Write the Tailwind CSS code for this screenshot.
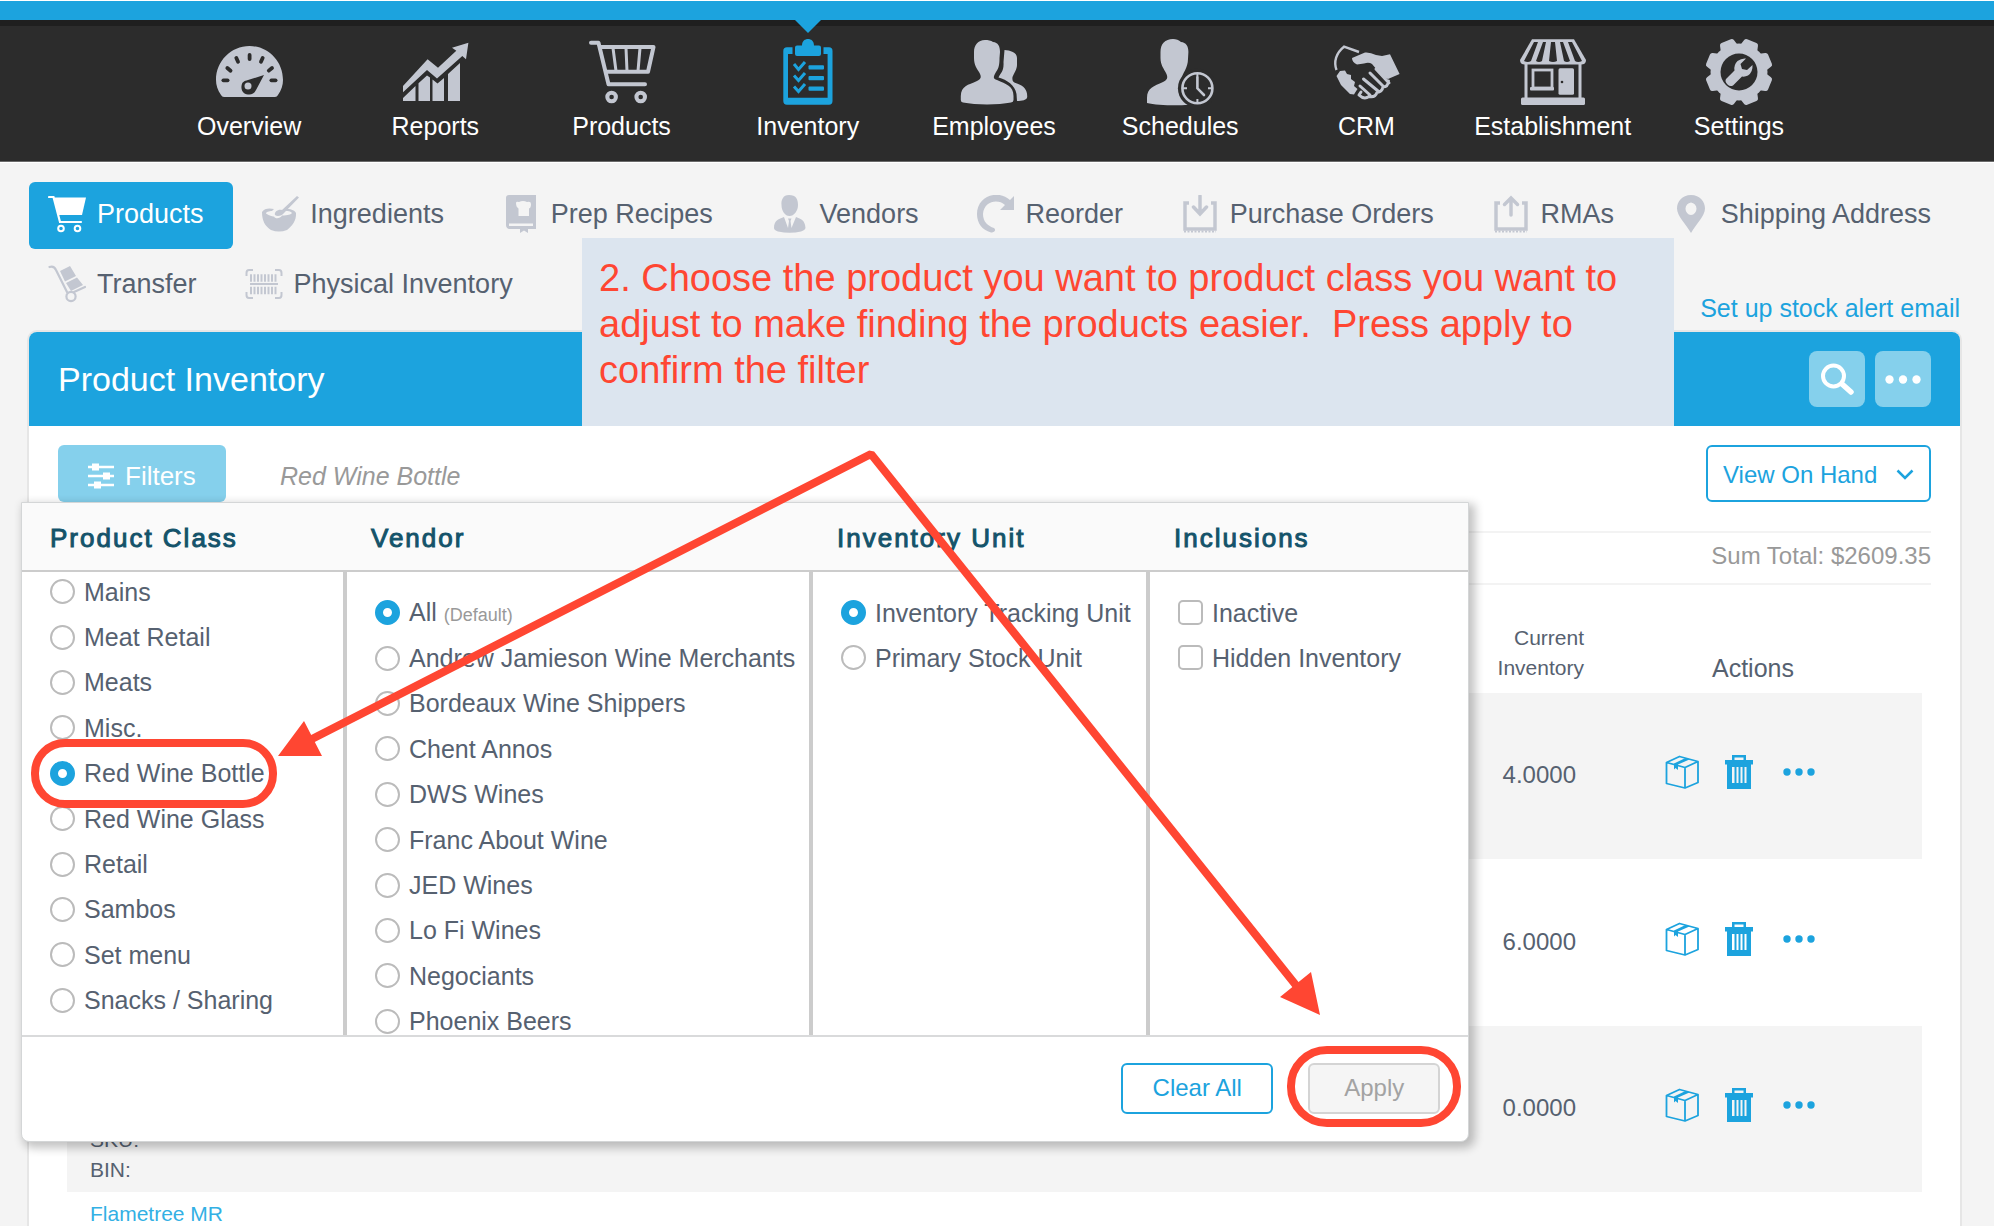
<!DOCTYPE html>
<html lang="en">
<head>
<meta charset="utf-8">
<title>Product Inventory</title>
<script src="https://cdn.jsdelivr.net/npm/@tailwindcss/browser@4"></script>
</head>
<body class="bg-[#f4f4f4] font-['Liberation_Sans',Arial,sans-serif] text-[#566170]">
<svg class="hidden" aria-hidden="true">
  <symbol id="box" viewBox="0 0 34 34">
    <path d="M1.500 7.500 L14.500 1.500 L33 6.500 V27.500 L20 33 L1.500 28.500 Z M1.500 7.500 L20 12.500 L33 6.500 M20 12.500 V33" fill="none" stroke="#1ca3de" stroke-width="1.800" stroke-linejoin="round"/>
    <path d="M20.500 3 L25 4.200 L13 9.500 V15 L10.500 13 L9 14.500 V8.500 Z" fill="#1ca3de"/>
  </symbol>
  <symbol id="trash" viewBox="0 0 28 34">
    <path fill="#1ca3de" fill-rule="evenodd" d="M7 0 H21 V5 H28 V9.500 H26 V34 H2 V9.500 H0 V5 H7 Z M9.500 2.500 V5 H18.500 V2.500 Z M7 12 V28 H9.500 V12 Z M11.500 12 V28 H13.500 V12 Z M15.500 12 V28 H17.500 V12 Z M19.500 12 V28 H21.500 V12 Z"/>
  </symbol>
  <symbol id="dots" viewBox="0 0 32 8">
    <circle cx="4" cy="4" r="3.700" fill="currentColor"/><circle cx="16" cy="4" r="3.700" fill="currentColor"/><circle cx="28" cy="4" r="3.700" fill="currentColor"/>
  </symbol>
</svg>

<div class="relative h-screen overflow-hidden">
  <header class="border-t border-white">
    <div class="h-[19px] bg-[#1ca3de]"></div>
    <nav class="border-t-6 border-b border-t-[#1f1f1f] border-b-[#6a6a6a] bg-[#2c2c2c] pt-3 pr-[162px] pb-[19px] pl-[156px]">
      <ul class="grid grid-cols-9 text-center text-[25px] leading-8 text-white">
        <li><a href="#" class="flex flex-col items-center gap-1">
          <svg class="size-[68px]" viewBox="0 0 68 68"><path fill="#c3c7d1" d="M9 59 Q7 59 6 57 C2.500 52 1 47 1 42 C1 23 16 8 34.500 8 S68 23 68 42 C68 47 66.500 52 63 57 Q62 59 60 59 Z"/>
            <g fill="#2c2c2c"><rect x="32.700" y="15" width="3.800" height="8" rx="1.900"/><rect x="20.300" y="18" width="3.800" height="8" rx="1.900" transform="rotate(-24 22 22)"/><rect x="44.900" y="18" width="3.800" height="8" rx="1.900" transform="rotate(24 47 22)"/><rect x="12" y="27.300" width="3.800" height="8" rx="1.900" transform="rotate(-50 14 31.300)"/><rect x="53.500" y="27.300" width="3.800" height="8" rx="1.900" transform="rotate(50 55.400 31.300)"/><rect x="6.500" y="40.400" width="8" height="3.800" rx="1.900"/><rect x="54.500" y="40.400" width="8" height="3.800" rx="1.900"/>
            <path d="M49 37 L41 52 C39 56 36 57 33 56.500 C28 56 26 52 26.500 48 C27 44 29 43 33 42 Z"/></g><circle cx="33" cy="48" r="3.500" fill="#c3c7d1"/></svg>
          Overview</a></li>
        <li><a href="#" class="flex flex-col items-center gap-1">
          <svg class="size-[68px]" viewBox="0 0 68 68" fill="#c3c7d1"><path d="M2 48 L26.600 21.300 L37 29.700 L55.300 12.700 L51 9.700 L67.400 4.700 L65 21.300 L61.300 18 L36 40.500 L26 32 L2 54.300 Z"/><path d="M2 63 V60 L14.500 48 V63 Z M17.500 63 V45.300 L26 37.500 L29 39.500 V63 Z M31.500 63 V41.500 L36.500 45.500 L43 40 V63 Z M47 63 V36 L59 25 V63 Z"/></svg>
          Reports</a></li>
        <li><a href="#" class="flex flex-col items-center gap-1">
          <svg class="size-[68px]" viewBox="0 0 68 68" fill="none" stroke="#c3c7d1" stroke-width="4" stroke-linecap="round" stroke-linejoin="round"><path d="M3 4.700 H10.500 L20.500 46.300 H57"/><path d="M12.500 9 H65.500 L60 33.700 H18.500"/><path stroke-width="3" d="M25 10 L28 33 M38 10 L39 33 M52 10 L50 33"/><circle cx="23.600" cy="59" r="4.300"/><circle cx="52.700" cy="59" r="4.300"/></svg>
          Products</a></li>
        <li class="relative"><a href="#" class="flex flex-col items-center gap-1">
          <svg class="absolute -top-[18px] h-[13px] w-[26px]" viewBox="0 0 26 13"><path fill="#1ca3de" d="M0 0 H26 L13 13 Z"/></svg>
          <svg class="size-[68px]" viewBox="0 0 68 68" fill="#1ca3de"><path d="M18.500 9.300 H13 Q9.300 9.300 9.300 13 V63 Q9.300 66.700 13 66.700 H55 Q58.500 66.700 58.500 63 V13 Q58.500 9.300 55 9.300 H49.500 V16 H53.600 V59.700 H14 V16 H18.500 Z"/><path d="M28 7.500 C28 3 31 1 34 1 S40 3 40 7.500 H45 Q47 7.500 47 9.500 V16 Q47 18 45 18 H23 Q21 18 21 16 V9.500 Q21 7.500 23 7.500 Z"/><rect x="34.500" y="27.300" width="15.500" height="4.200" rx="1"/><rect x="34.500" y="38" width="15.500" height="4.200" rx="1"/><rect x="34.500" y="48.500" width="15.500" height="4.200" rx="1"/><path fill="none" stroke="#1ca3de" stroke-width="3" d="M20 26 L24.500 31.500 L31 24 M20 37.500 L24.500 42.500 L31 35 M20 48.500 L24.500 53.500 L31 46"/></svg>
          Inventory</a></li>
        <li><a href="#" class="flex flex-col items-center gap-1">
          <svg class="size-[68px]" viewBox="0 0 68 68" fill="#c3c7d1"><path d="M25 2 C18 2 14 7 14 14 V20 C14 27 17 31 19 34 C22 39 21 41 17 43 C8 47 1 48 .8 58 V62 Q.8 64 3 64.500 C16 67 38 67 51 64.500 Q53.500 64 53.500 62 V58 C53.500 48 46 46 37 42 C33 41 33 39 36 34 C39 30 39.500 26 39.500 20 L40 14 C40 8 38 4.500 33 4 C31 2.500 28 2 25 2Z"/><path d="M44.500 12 C50 12.500 57 14 57 20 V25 C57.500 31 54 35 52.500 39 C52 43 53 44 57 45.500 C64 48 67.500 52 67.200 59 C67 62 62 63 57 63 L56.500 56 C55 47 47 42 38.500 39.500 C41 34 44 33 43.500 24Z"/></svg>
          Employees</a></li>
        <li><a href="#" class="flex flex-col items-center gap-1">
          <svg class="size-[68px]" viewBox="0 0 68 68"><path fill="#c3c7d1" d="M27 1 C19 1 14.500 6 14.500 14 V20 C14.500 27 18 31 20 35 C22.500 40 21 42 17 44 C8 48 1 50 1 60 V65 C10 67.500 30 67.500 42 67 L50 48 C44 46 36 44 36 40 C36 36 42 30 42 21 L42.400 14 C42.400 8 40 4.500 35 4 C33 2 30 1 27 1Z"/><circle cx="51.400" cy="50.300" r="19.500" fill="#2c2c2c"/><circle cx="51.400" cy="50.300" r="15" fill="none" stroke="#c3c7d1" stroke-width="2.600"/><path fill="none" stroke="#c3c7d1" stroke-width="2.600" stroke-linecap="round" d="M51.400 39 V50.300 L58 57"/><path stroke="#c3c7d1" stroke-width="2" d="M37 50.300 H41 M62 50.300 H66 M51.400 61 V65 M51.400 35 V38"/></svg>
          Schedules</a></li>
        <li><a href="#" class="flex flex-col items-center gap-1">
          <svg class="size-[68px]" viewBox="0 0 68 68" fill="#c3c7d1"><path fill="none" stroke="#c3c7d1" stroke-width="2.400" d="M4.500 32 C1.500 24 4 15 12 8.700 L27 14"/><path d="M8 33 L13 32.500 L15 36 L19 37 L19 41 L23 44 L22 48 L25.500 51 L23.500 54 L22 56.500 L18 56 L9 47 L4.500 38 Z"/><path d="M20 20 L33 14.500 Q38 14 44 17 L50 18 L58 16.300 L67.600 36 L56 41 L51 39 L40 26 Q37 24 32 25.500 L25 26.500 Q20 24 20 20 Z"/><path fill="none" stroke="#c3c7d1" stroke-width="3" stroke-linecap="round" stroke-linejoin="round" d="M38 35 L51 48 M31.500 41 L46 53 M28 48 L38 57 M56.500 43 Q56 49 51 49 Q50 54 45 54.500 Q43 60 37 58.500 Q32 62 27 57 L29 54 M44 31 L57 45"/></svg>
          CRM</a></li>
        <li><a href="#" class="flex flex-col items-center gap-1">
          <svg class="size-[68px]" viewBox="0 0 68 68"><path fill="#c3c7d1" d="M13 1.300 H55 L67 22 Q67 26.500 62 26.500 H6 Q1 26.500 1 22 Z"/><path fill="#2c2c2c" d="M15 4 H19 L12 23 Q9 25 5 23 Z M24 4 H27 L23 23 Q20 25 17 23 Z M32 4 H36 L38 23 Q34 25 30 23 Z M41 4 H44 L51 23 Q48 25 45 23 Z M49 4 H53 L63 23 Q59 25 56 23 Z"/><path fill="none" stroke="#c3c7d1" stroke-width="3" d="M7 26 V60 M61 26 V60"/><rect x="2" y="59.500" width="64" height="7.500" rx="1.500" fill="#c3c7d1"/><rect x="14" y="32" width="19" height="18" fill="none" stroke="#c3c7d1" stroke-width="2.800"/><rect x="11" y="49" width="24" height="3.500" rx="1" fill="#c3c7d1"/><rect x="39.500" y="30.300" width="15.500" height="26.500" rx="1.500" fill="#c3c7d1"/><circle cx="43" cy="44" r="1.300" fill="#2c2c2c"/></svg>
          Establishment</a></li>
        <li><a href="#" class="flex flex-col items-center gap-1">
          <svg class="size-[68px]" viewBox="0 0 68 68" fill="#c3c7d1"><circle cx="34" cy="34" r="28.500"/><g id="teeth"><path id="tooth" d="M24 12 L26.500 2.500 Q27 .5 29 .5 H39 Q41 .5 41.500 2.500 L44 12 Z" transform="rotate(22.500 34 34)"/><use href="#tooth" transform="rotate(45 34 34)"/><use href="#tooth" transform="rotate(90 34 34)"/><use href="#tooth" transform="rotate(135 34 34)"/><use href="#tooth" transform="rotate(180 34 34)"/><use href="#tooth" transform="rotate(225 34 34)"/><use href="#tooth" transform="rotate(270 34 34)"/><use href="#tooth" transform="rotate(315 34 34)"/></g><circle cx="34" cy="34" r="18.500" fill="#2c2c2c"/><path d="M41 20.500 L35.500 26 L37 31 L42 32 L47.500 27 Q48 34 43 37.500 Q40 39 37 38.500 L28 47.500 Q25 49 22.500 46.500 Q19.500 43.500 21 41 L29.500 32.500 Q28.500 27 32.500 23 Q36.500 20 41 20.500 Z"/></svg>
          Settings</a></li>
      </ul>
    </nav>
  </header>

  <main class="border-t border-white px-[34px] pt-[19px] pl-[29px]">
    <nav aria-label="Inventory sections" class="text-[27px] leading-8">
      <div class="flex justify-between">
        <a href="#" class="flex h-[67px] items-center gap-[11px] rounded-md bg-[#1ca3de] pr-[29px] pb-[3px] pl-[19px] text-white"><svg class="size-[38px]" viewBox="0 0 38 38"><path d="M1 2 H5.500 L12 27 H33" fill="none" stroke="#fff" stroke-width="2.200" stroke-linecap="round"/><path fill="#fff" d="M6 2.500 H38 L34 20 H10 Z"/><circle cx="13" cy="33.500" r="2.800" fill="none" stroke="#fff" stroke-width="2"/><circle cx="29.500" cy="33.500" r="2.800" fill="none" stroke="#fff" stroke-width="2"/></svg>Products</a>
        <a href="#" class="flex h-[67px] items-center gap-[11px] pr-[29px] pb-[3px] pl-[19px]"><svg class="size-[38px]" viewBox="0 0 38 38" fill="#c3c7d1"><path d="M1 17 C3 13 9 13 13 14 L11 16 C8 16 5 17 5 18.500 C8 21 13 21.500 13 21.500 C14 24 19 24 21 20.500 C27 20.500 30 19.500 31 18 C30 16.500 27 16 24 15.800 L26 14 C31 14 34 16 35 18 C35.500 26 31 31 26 35 Q18 38 10 35 C4 31 1 26 1 17Z"/><path d="M36 1 L38 2.500 L23 18 C21 21 16 22 14 20 C13 17 17 14 21 15 Z"/></svg>Ingredients</a>
        <a href="#" class="flex h-[67px] items-center gap-[11px] pr-[29px] pb-[3px] pl-[19px]"><svg class="size-[38px]" viewBox="0 0 38 38"><path fill="#c3c7d1" fill-rule="evenodd" d="M7 0 H34 V34 H26 V38 L22 35.500 L18 38 V34 H7 Q4 33 4 30 V3 Q4 0 7 0 Z M7 28.500 V31 H31 V28.500 Z"/><path fill="#f4f4f4" d="M14 8 Q14 6 17 7 Q21 5 25 7 Q29 6 29 9 Q29 13 27 13.500 V21 H16.500 V13.500 Q14 12 14 8Z"/></svg>Prep Recipes</a>
        <a href="#" class="flex h-[67px] items-center gap-[11px] pr-[29px] pb-[3px] pl-[19px]"><svg class="size-[38px]" viewBox="0 0 38 38" fill="#c3c7d1"><path d="M18 0 C12 0 10 5 10.500 10 C10.500 16 14 21 18.500 21 S27 16 27 10 C27 4 25 0 18 0Z"/><path d="M13 22 L17 33 L18 26 L17 23.500 H20.500 L19.500 26 L20.500 33 L25 22 C30 24 34 25 34.500 33 Q34 35 30 36.500 Q19 39 7 36.500 Q3 35 3 33 C3 25 8 24 13 22Z"/></svg>Vendors</a>
        <a href="#" class="flex h-[67px] items-center gap-[11px] pr-[29px] pb-[3px] pl-[19px]"><svg class="size-[38px]" viewBox="0 0 38 38" fill="#c3c7d1"><path d="M38 1 V15 H24 L29 10 C22 3.500 8 6 7 19 C7 27 12 31 18 33 C21 36 17 38 15 37.500 C6 35 1 28 1 19 C1 1 22 -6 34 5 Z"/></svg>Reorder</a>
        <a href="#" class="flex h-[67px] items-center gap-[11px] pr-[29px] pb-[3px] pl-[19px]"><svg class="size-[38px]" viewBox="0 0 38 38" fill="none" stroke="#c3c7d1" stroke-width="3.500"><path d="M8 8 H4 V34 H34 V8 H30"/><path stroke-dasharray="2 1.500" stroke-width="2" d="M3 36.500 H35"/><path d="M19 1 V18 M12.500 12 L19 19 L25.500 12" stroke-linecap="round"/></svg>Purchase Orders</a>
        <a href="#" class="flex h-[67px] items-center gap-[11px] pr-[29px] pb-[3px] pl-[19px]"><svg class="size-[38px]" viewBox="0 0 38 38" fill="none" stroke="#c3c7d1" stroke-width="3.500"><path d="M8 8 H4 V34 H34 V8 H30"/><path stroke-dasharray="2 1.500" stroke-width="2" d="M3 36.500 H35"/><path d="M19 20 V3 M12.500 9.500 L19 3 L25.500 9.500" stroke-linecap="round"/></svg>RMAs</a>
        <a href="#" class="flex h-[67px] items-center gap-[11px] pr-[29px] pb-[3px] pl-[19px]"><svg class="size-[38px]" viewBox="0 0 38 38" fill="#c3c7d1"><path fill-rule="evenodd" d="M19 0 C10 0 5 6.500 5 13.500 C5 21 14 29 19 38 C24 29 33 21 33 13.500 C33 6.500 28 0 19 0Z M19 7.500 A6.300 6.300 0 0 1 19 20 A6.300 6.300 0 0 1 19 7.500Z"/></svg>Shipping Address</a>
      </div>
      <div class="mt-[3px] flex h-20 items-start">
        <a href="#" class="flex h-[67px] items-center gap-[11px] pr-[29px] pb-[3px] pl-[19px]"><svg class="size-[38px]" viewBox="0 0 38 38"><path d="M1.500 2 Q6 .5 8 5 L19 27 M26 27 L37 22" fill="none" stroke="#c3c7d1" stroke-width="2.200" stroke-linecap="round"/><circle cx="23" cy="31.500" r="4.600" fill="none" stroke="#c3c7d1" stroke-width="2.200"/><path fill="#c3c7d1" d="M12 6 L22 1 L28 11 L17 16.500 Z M18 18 L29 12.500 L35 20 L23 26 Z"/></svg>Transfer</a>
        <a href="#" class="flex h-[67px] items-center gap-[11px] pb-[3px] pl-[19px]"><svg class="size-[38px]" viewBox="0 0 38 38" fill="none" stroke="#c3c7d1"><path stroke-width="2" d="M8 5 H4 Q1.500 5 1.500 8 V11 M30 5 H34 Q36.500 5 36.500 8 V11 M8 33 H4 Q1.500 33 1.500 30 V27 M30 33 H34 Q36.500 33 36.500 30 V27"/><path stroke-width="2" d="M5 19 H33"/><path stroke-width="7.500" stroke-dasharray="2 1.500" d="M5 13 H33 M5 25.500 H33"/></svg>Physical Inventory</a>
        <a href="#" class="ml-auto self-end pb-[9px] text-[25px] leading-[30px] text-[#1ca3de]">Set up stock alert email</a>
      </div>
    </nav>

    <section class="relative rounded-t-lg bg-white shadow-[0_0_0_2px_#e6e6e6]">
      <div class="flex h-[94px] items-center gap-[10px] rounded-t-lg bg-[#1ca3de] pr-[29px] pl-[29px]">
        <h1 class="mr-auto text-[34px] leading-10 text-white">Product Inventory</h1>
        <button type="button" aria-label="Search" class="flex size-14 items-center justify-center rounded-lg bg-[#85d0ec]"><svg class="size-[36px]" viewBox="0 0 36 36" fill="none" stroke="#fff"><circle cx="14.500" cy="15" r="10.500" stroke-width="4"/><path stroke-width="5.500" stroke-linecap="round" d="M23 23 L32 31"/></svg></button>
        <button type="button" aria-label="More" class="flex size-14 items-center justify-center rounded-lg bg-[#85d0ec] text-white"><svg class="h-[9px] w-10"><use href="#dots"/></svg></button>
      </div>
      <div class="px-[29px] pt-[19px]">
        <div class="flex h-[57px] items-center">
          <button type="button" class="flex h-[57px] w-[168px] items-center gap-[11px] rounded-md bg-[#85d0ec] pt-1 pl-[30px] text-[26px] leading-8 text-white"><svg class="size-[26px]" viewBox="0 0 26 26"><path stroke="#fff" stroke-width="2.500" d="M0 4 H26 M0 13 H26 M0 22 H26"/><path fill="#fff" d="M4 .5 H11 V7.500 H4 Z M15 9.500 H22 V16.500 H15 Z M6 18.500 H13 V25.500 H6 Z"/></svg>Filters</button>
          <p class="ml-[54px] pt-1 text-[25px] leading-8 text-[#999] italic">Red Wine Bottle</p>
          <div class="relative ml-auto">
            <select aria-label="View" class="h-[57px] w-[225px] appearance-none rounded-md border-2 border-[#1ca3de] bg-white pt-0.5 pl-[15px] text-2xl text-[#1ca3de]"><option>View On Hand</option></select>
            <svg class="pointer-events-none absolute top-6 right-[17px] h-[11px] w-[18px]" viewBox="0 0 18 11"><path d="M1.500 1.500 L9 9 L16.500 1.500" fill="none" stroke="#1ca3de" stroke-width="2.500"/></svg>
          </div>
        </div>
        <p class="mt-[29px] border-y-2 border-[#f3f3f3] pt-[7px] pb-[11px] text-right text-2xl text-[#999]">Sum Total: $2609.35</p>
      </div>
      <div class="px-[38px]">
        <table class="w-full table-fixed border-collapse">
          <thead>
            <tr class="h-[108px] align-bottom text-[21px] leading-[30px]">
              <td></td>
              <th scope="col" class="w-[120px] pb-[10px] text-right font-normal">Current<br>Inventory</th>
              <th scope="col" class="w-[338px] pb-[10px] text-center text-[25px] font-normal">Actions</th>
            </tr>
          </thead>
          <tbody class="text-2xl">
            <tr class="h-[166px] bg-[#f4f4f4]">
              <td></td>
              <td class="pr-2 pb-0.5 text-right">4.0000</td>
              <td class="pb-2 pl-[81px] text-[#1ca3de]"><div class="flex items-center"><button type="button" aria-label="Stock"><svg class="block size-[34px]"><use href="#box"/></svg></button><button type="button" aria-label="Delete" class="ml-[26px]"><svg class="block h-[34px] w-7"><use href="#trash"/></svg></button><button type="button" aria-label="More" class="ml-[30px]"><svg class="block h-2 w-8"><use href="#dots"/></svg></button></div></td>
            </tr>
            <tr class="h-[167px]">
              <td></td>
              <td class="pr-2 pb-0.5 text-right">6.0000</td>
              <td class="pb-2 pl-[81px] text-[#1ca3de]"><div class="flex items-center"><button type="button" aria-label="Stock"><svg class="block size-[34px]"><use href="#box"/></svg></button><button type="button" aria-label="Delete" class="ml-[26px]"><svg class="block h-[34px] w-7"><use href="#trash"/></svg></button><button type="button" aria-label="More" class="ml-[30px]"><svg class="block h-2 w-8"><use href="#dots"/></svg></button></div></td>
            </tr>
            <tr class="h-[166px] bg-[#f4f4f4]">
              <td class="pb-[7px] pl-[23px] align-bottom text-[21px] leading-[30px]">SKU:<br>BIN:</td>
              <td class="pr-2 pb-0.5 text-right">0.0000</td>
              <td class="pb-2 pl-[81px] text-[#1ca3de]"><div class="flex items-center"><button type="button" aria-label="Stock"><svg class="block size-[34px]"><use href="#box"/></svg></button><button type="button" aria-label="Delete" class="ml-[26px]"><svg class="block h-[34px] w-7"><use href="#trash"/></svg></button><button type="button" aria-label="More" class="ml-[30px]"><svg class="block h-2 w-8"><use href="#dots"/></svg></button></div></td>
            </tr>
            <tr class="h-[166px]">
              <td class="pt-[7px] pl-[23px] align-top text-[21px] leading-[30px]"><a href="#" class="text-[#33b0e4]">Flametree MR</a></td>
              <td></td>
              <td></td>
            </tr>
          </tbody>
        </table>
      </div>

      <!-- Filter popover -->
      <form class="absolute top-[170px] -left-2 w-3/4 rounded-b-lg border border-[#d4d6d7] bg-white text-[25px] leading-8 shadow-[4px_4px_10px_2px_#0000003d]">
        <div class="grid h-[69px] grid-cols-[321px_466px_337px_1fr] items-center border-b-2 border-[#ccc] bg-[#fafafa] pt-0.5 text-[26px] tracking-[2px] text-[#14536a] [-webkit-text-stroke:1px_#14536a]">
          <h2 class="pl-7">Product Class</h2>
          <h2 class="pl-7">Vendor</h2>
          <h2 class="pl-7">Inventory Unit</h2>
          <h2 class="pl-7">Inclusions</h2>
        </div>
        <div class="grid h-[463px] grid-cols-[321px_466px_337px_1fr] overflow-hidden">
          <div class="-mt-[3px] grid h-[454px] auto-rows-fr items-center pl-7">
            <label class="flex items-center gap-[9px]"><input type="radio" name="class" class="size-[25px] appearance-none rounded-full border-2 border-[#bbb] bg-white checked:border-8 checked:border-[#1ca3de]">Mains</label>
            <label class="flex items-center gap-[9px]"><input type="radio" name="class" class="size-[25px] appearance-none rounded-full border-2 border-[#bbb] bg-white checked:border-8 checked:border-[#1ca3de]">Meat Retail</label>
            <label class="flex items-center gap-[9px]"><input type="radio" name="class" class="size-[25px] appearance-none rounded-full border-2 border-[#bbb] bg-white checked:border-8 checked:border-[#1ca3de]">Meats</label>
            <label class="flex items-center gap-[9px]"><input type="radio" name="class" class="size-[25px] appearance-none rounded-full border-2 border-[#bbb] bg-white checked:border-8 checked:border-[#1ca3de]">Misc.</label>
            <label class="flex items-center gap-[9px]"><input type="radio" name="class" checked class="size-[25px] appearance-none rounded-full border-2 border-[#bbb] bg-white checked:border-8 checked:border-[#1ca3de]">Red Wine Bottle</label>
            <label class="flex items-center gap-[9px]"><input type="radio" name="class" class="size-[25px] appearance-none rounded-full border-2 border-[#bbb] bg-white checked:border-8 checked:border-[#1ca3de]">Red Wine Glass</label>
            <label class="flex items-center gap-[9px]"><input type="radio" name="class" class="size-[25px] appearance-none rounded-full border-2 border-[#bbb] bg-white checked:border-8 checked:border-[#1ca3de]">Retail</label>
            <label class="flex items-center gap-[9px]"><input type="radio" name="class" class="size-[25px] appearance-none rounded-full border-2 border-[#bbb] bg-white checked:border-8 checked:border-[#1ca3de]">Sambos</label>
            <label class="flex items-center gap-[9px]"><input type="radio" name="class" class="size-[25px] appearance-none rounded-full border-2 border-[#bbb] bg-white checked:border-8 checked:border-[#1ca3de]">Set menu</label>
            <label class="flex items-center gap-[9px]"><input type="radio" name="class" class="size-[25px] appearance-none rounded-full border-2 border-[#bbb] bg-white checked:border-8 checked:border-[#1ca3de]">Snacks / Sharing</label>
          </div>
          <div class="border-l-4 border-[#ccc] pt-[18px] pl-7">
            <div class="grid h-[454px] auto-rows-fr items-center">
              <label class="flex items-center gap-[9px]"><input type="radio" name="vendor" checked class="size-[25px] appearance-none rounded-full border-2 border-[#bbb] bg-white checked:border-8 checked:border-[#1ca3de]"><span>All <small class="text-lg text-[#999]">(Default)</small></span></label>
              <label class="flex items-center gap-[9px]"><input type="radio" name="vendor" class="size-[25px] appearance-none rounded-full border-2 border-[#bbb] bg-white checked:border-8 checked:border-[#1ca3de]">Andrew Jamieson Wine Merchants</label>
              <label class="flex items-center gap-[9px]"><input type="radio" name="vendor" class="size-[25px] appearance-none rounded-full border-2 border-[#bbb] bg-white checked:border-8 checked:border-[#1ca3de]">Bordeaux Wine Shippers</label>
              <label class="flex items-center gap-[9px]"><input type="radio" name="vendor" class="size-[25px] appearance-none rounded-full border-2 border-[#bbb] bg-white checked:border-8 checked:border-[#1ca3de]">Chent Annos</label>
              <label class="flex items-center gap-[9px]"><input type="radio" name="vendor" class="size-[25px] appearance-none rounded-full border-2 border-[#bbb] bg-white checked:border-8 checked:border-[#1ca3de]">DWS Wines</label>
              <label class="flex items-center gap-[9px]"><input type="radio" name="vendor" class="size-[25px] appearance-none rounded-full border-2 border-[#bbb] bg-white checked:border-8 checked:border-[#1ca3de]">Franc About Wine</label>
              <label class="flex items-center gap-[9px]"><input type="radio" name="vendor" class="size-[25px] appearance-none rounded-full border-2 border-[#bbb] bg-white checked:border-8 checked:border-[#1ca3de]">JED Wines</label>
              <label class="flex items-center gap-[9px]"><input type="radio" name="vendor" class="size-[25px] appearance-none rounded-full border-2 border-[#bbb] bg-white checked:border-8 checked:border-[#1ca3de]">Lo Fi Wines</label>
              <label class="flex items-center gap-[9px]"><input type="radio" name="vendor" class="size-[25px] appearance-none rounded-full border-2 border-[#bbb] bg-white checked:border-8 checked:border-[#1ca3de]">Negociants</label>
              <label class="flex items-center gap-[9px]"><input type="radio" name="vendor" class="size-[25px] appearance-none rounded-full border-2 border-[#bbb] bg-white checked:border-8 checked:border-[#1ca3de]">Phoenix Beers</label>
            </div>
          </div>
          <div class="border-l-4 border-[#ccc] pt-[18px] pl-7">
            <label class="flex h-[45px] items-center gap-[9px]"><input type="radio" name="unit" checked class="size-[25px] appearance-none rounded-full border-2 border-[#bbb] bg-white checked:border-8 checked:border-[#1ca3de]">Inventory Tracking Unit</label>
            <label class="flex h-[45px] items-center gap-[9px]"><input type="radio" name="unit" class="size-[25px] appearance-none rounded-full border-2 border-[#bbb] bg-white checked:border-8 checked:border-[#1ca3de]">Primary Stock Unit</label>
          </div>
          <div class="border-l-4 border-[#ccc] pt-[18px] pl-7">
            <label class="flex h-[45px] items-center gap-[9px]"><input type="checkbox" class="size-[25px] appearance-none rounded-[5px] border-2 border-[#bbb] bg-white">Inactive</label>
            <label class="flex h-[45px] items-center gap-[9px]"><input type="checkbox" class="size-[25px] appearance-none rounded-[5px] border-2 border-[#bbb] bg-white">Hidden Inventory</label>
          </div>
        </div>
        <div class="flex h-[106px] items-center justify-end gap-[35px] border-t-2 border-[#d9dadb] pr-7 pb-0.5 text-2xl">
          <button type="button" class="h-[51px] w-[152px] rounded-md border-2 border-[#1ca3de] text-[#1ca3de]">Clear All</button>
          <button type="submit" disabled class="h-[51px] w-[132px] rounded-md border-2 border-[#d4d4d4] bg-[#f5f5f5] text-[#a3a3a3]">Apply</button>
        </div>
      </form>
    </section>
  </main>

  <!-- Tutorial callout and pointers -->
  <p class="absolute top-[238px] left-[582px] h-[188px] w-[1092px] bg-[#dce5ef] pt-[17px] pl-[17px] text-[38px] leading-[46px] text-[#ff4632]">2. Choose the product you want to product class you want to<br>adjust to make finding the products easier.&nbsp; Press apply to<br>confirm the filter</p>
  <svg class="pointer-events-none absolute top-0 left-0 h-[1226px] w-[1994px]" viewBox="0 0 1994 1226">
    <path d="M310 740 L871 454 L1299 989" fill="none" stroke="#ff4632" stroke-width="8" stroke-linejoin="bevel"/>
    <path d="M278 756 L304 721 L322 756 Z M1320 1015 L1311 972 L1280 997 Z" fill="#ff4632"/>
    <rect x="35" y="743" width="238" height="61" rx="30" fill="none" stroke="#ff4632" stroke-width="8"/>
    <rect x="1291" y="1050" width="166" height="73" rx="36" fill="none" stroke="#ff4632" stroke-width="8"/>
  </svg>
</div>
</body>
</html>
